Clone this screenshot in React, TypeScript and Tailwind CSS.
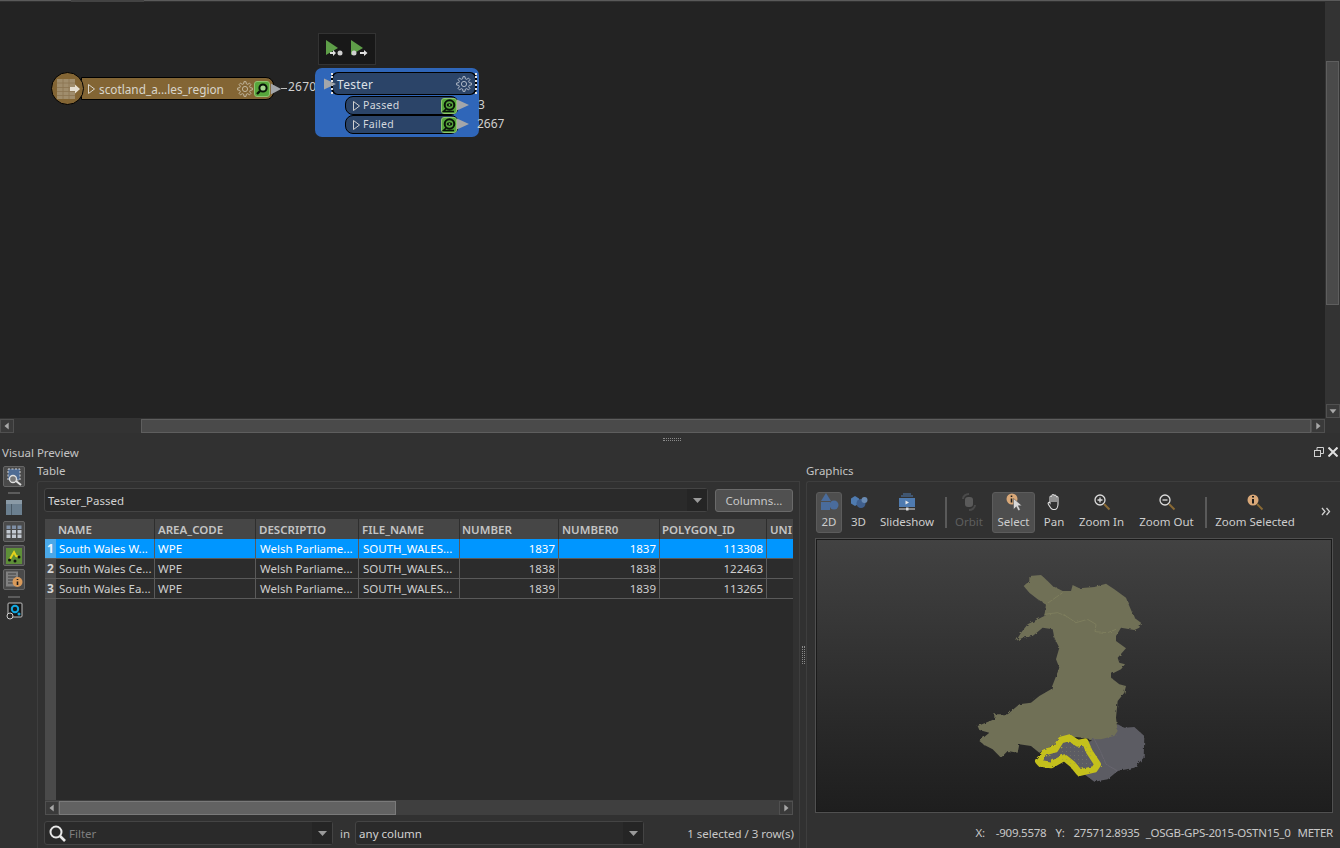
import React from "react";

const font = { fontFamily: '"Noto Sans", "Open Sans", sans-serif' };

function gearPath() {
  const pts: string[] = [];
  const n = 8;
  for (let i = 0; i < n; i++) {
    const a = (i / n) * Math.PI * 2;
    const s = Math.PI / n;
    const list: [number, number][] = [
      [5.4, a - s * 0.62],
      [7.4, a - s * 0.36],
      [7.4, a + s * 0.36],
      [5.4, a + s * 0.62],
    ];
    list.forEach(([r, t]) => pts.push(`${(8 + r * Math.sin(t)).toFixed(2)} ${(8 - r * Math.cos(t)).toFixed(2)}`));
  }
  return "M" + pts.join("L") + "Z";
}

function Gear({ c = "#cfc8b4" }: { c?: string }) {
  return (
    <svg width="16" height="16" viewBox="0 0 16 16" fill="none" stroke={c} strokeWidth="0.8">
      <circle cx="8" cy="8" r="2.600" />
      <path d={gearPath()} />
    </svg>
  );
}

function Inspect({ eye }: { eye?: boolean }) {
  return (
    <svg width="16" height="16" viewBox="0 0 16 16">
      <rect x="0.5" y="0.5" width="15" height="15" rx="2.5" fill="#57a63c" stroke="#8fc46f" />
      {eye ? (
        <>
          <circle cx="8.500" cy="7" r="4.800" fill="#57a63c" stroke="#071207" strokeWidth="2" />
          <ellipse cx="8.500" cy="7" rx="2.800" ry="1.800" fill="#071207" />
          <circle cx="8.500" cy="7" r="0.800" fill="#a5d68f" />
          <path d="M5 11l-2.500 2.500H13" fill="none" stroke="#071207" strokeWidth="1.600" />
        </>
      ) : (
        <>
          <circle cx="9" cy="7" r="3.600" fill="#a5d68f" stroke="#071207" strokeWidth="2" />
          <path d="M6 10l-3 3" stroke="#071207" strokeWidth="2.400" />
        </>
      )}
    </svg>
  );
}

function PortArrow({ w = 14 }: { w?: number }) {
  return (
    <svg width={w} height="14" viewBox="0 0 14 14" preserveAspectRatio="none">
      <path d="M1 1.5L13 7 1 12.500z" fill="#a3a6aa" />
    </svg>
  );
}

function Expand({ c = "#cfcfcf" }: { c?: string }) {
  return (
    <svg width="9" height="12" viewBox="0 0 9 12" fill="none" stroke={c}>
      <path d="M1.500 1.500L7.500 6 1.500 10.500z" />
    </svg>
  );
}

function Port({ label, y }: { label: string; y: string }) {
  return (
    <div className={`absolute left-[30px] ${y} flex h-[19px] w-[114px] items-center rounded-[8px] border border-black bg-[#2b4468] pl-[6px] text-[10.500px] text-[#d4d8de]`}>
      <Expand />
      <span className="ml-[2px] tracking-[0.3px]">{label}</span>
      <span className="ml-auto mr-[1px] flex">
        <Inspect eye />
      </span>
    </div>
  );
}

function Canvas() {
  return (
    <div className="relative flex-1 overflow-hidden bg-[#232323]">
      <div className="absolute left-[51px] top-[70px] flex items-center">
        <div className="relative z-10 flex h-[33px] w-[33px] items-center justify-center rounded-full border border-black bg-[#836534]">
          <svg width="28" height="26" viewBox="0 0 28 26">
            <rect x="3" y="3" width="18" height="20" fill="#a08d6c" />
            <path d="M3 7h18M3 11.500h18M3 15.500h18M3 19.500h18M9 3v20M15 3v20" stroke="#8a7350" strokeWidth="0.800" />
            <path d="M16 11h5V8.500l5 4.500-5 4.500V15h-5z" fill="#e6dfd0" />
          </svg>
        </div>
        <div className="-ml-[3px] flex h-[23px] w-[193px] items-center rounded-r-[8px] border border-black bg-[#836534] pl-[5px] text-[11.800px] text-[#d9d5cb]">
          <Expand c="#d9d5cb" />
          <span className="ml-[3px] translate-y-[1px]">scotland_a...les_region</span>
          <span className="ml-auto flex items-center gap-[1px] pr-[3px]">
            <Gear />
            <Inspect />
          </span>
        </div>
        <div className="-ml-[4px] flex items-center">
          <PortArrow w={12} />
          <span className="-ml-[1px] h-px w-[6px] bg-[#bdbdbd]" />
        </div>
      </div>
      <div className="absolute left-[288px] top-[76px] text-[12px] tracking-[0.2px] text-[#d0d0d0]">2670</div>
      <div className="absolute left-[318px] top-[31px] flex h-[32px] w-[58px] items-center gap-[6px] border border-[#333333] bg-[#181818] pl-[6px]">
        <svg width="19" height="20" viewBox="0 0 19 20">
          <path d="M1 1l12 8-12 7z" fill="#5e9e48" />
          <path d="M5 13h3v-2l3 3-3 3v-2H5z" fill="#e0e0e0" />
          <circle cx="15" cy="14" r="2.500" fill="#d0d0d0" />
        </svg>
        <svg width="19" height="20" viewBox="0 0 19 20">
          <path d="M1 1l12 8-12 7z" fill="#5e9e48" />
          <circle cx="4" cy="14" r="2.500" fill="#d0d0d0" />
          <path d="M10 13h4v-2l3.500 3-3.500 3v-2h-4z" fill="#e0e0e0" />
        </svg>
      </div>
      <div className="absolute left-[315px] top-[66px] h-[69px] w-[164px] rounded-[7px] bg-[#2f66b9]">
        <div className="absolute left-[16px] top-[4px] flex h-[23px] w-[146px] items-center rounded-[7px] border-x-2 border-y border-black bg-[#2b4468] pl-[4px] text-[12px] tracking-[0.3px] text-[#dde1e7]">
          <span className="translate-y-[1px]">Tester</span>
          <span className="ml-auto mr-[3px] flex">
            <Gear c="#cdd3dc" />
          </span>
        </div>
        <div className="absolute left-[16px] top-[5px] h-[21px] border-l-2 border-dotted border-[#e4e4e4]" />
        <div className="absolute left-[160px] top-[5px] h-[21px] border-l-2 border-dotted border-[#e4e4e4]" />
        <div className="absolute left-[8px] top-[9px]">
          <PortArrow />
        </div>
        <Port label="Passed" y="top-[28px]" />
        <Port label="Failed" y="top-[47px]" />
        <div className="absolute left-[141px] top-[30px]">
          <PortArrow />
        </div>
        <div className="absolute left-[141px] top-[49px]">
          <PortArrow />
        </div>
      </div>
      <div className="absolute left-[478px] top-[94px] text-[12px] text-[#d0d0d0]">3</div>
      <div className="absolute left-[477px] top-[113px] text-[12px] text-[#d0d0d0]">2667</div>
    </div>
  );
}

function ScrollBtn({ dir }: { dir: "l" | "r" | "u" | "d" }) {
  const p = { l: "M9 3v8L4 7z", r: "M5 3v8l5-4z", u: "M3 9h8L7 4z", d: "M3 5h8L7 10z" }[dir];
  return (
    <div className="flex h-[14px] w-[14px] shrink-0 items-center justify-center border border-[#505050] bg-[#3a3a3a]">
      <svg width="12" height="12" viewBox="0 0 14 14">
        <path d={p} fill="#a8a8a8" />
      </svg>
    </div>
  );
}

function Combo({ text, w, icon, dim }: { text: string; w: string; icon?: boolean; dim?: boolean }) {
  return (
    <div className={`flex h-[24px] ${w} items-center rounded-[3px] border border-[#444444] bg-[#2a2a2a] text-[11.500px]`}>
      {icon && (
        <svg className="ml-[3px]" width="19" height="19" viewBox="0 0 19 19" fill="none" stroke="#e8e8e8">
          <circle cx="8" cy="8" r="5.500" strokeWidth="2" />
          <path d="M12 12l5 5" strokeWidth="2.600" />
        </svg>
      )}
      <span className={`${icon ? "ml-[2px]" : "ml-[3px]"} translate-y-[1px] ${dim ? "text-[#7e7e7e]" : "text-[#d2d2d2]"}`}>{text}</span>
      <span className="ml-auto flex h-full w-[20px] items-center justify-center bg-[#252525]">
        <svg width="9" height="5" viewBox="0 0 9 5">
          <path d="M0 0h9L4.500 5z" fill="#9a9a9a" />
        </svg>
      </span>
    </div>
  );
}

const cols = [
  ["NAME", "w-[99px]", "pl-[2px]", "pl-[3px]"],
  ["AREA_CODE", "w-[101px]", "pl-[3px]", "pl-[3px]"],
  ["DESCRIPTIO", "w-[103px]", "pl-[3px]", "pl-[4px]"],
  ["FILE_NAME", "w-[101px]", "pl-[3px]", "pl-[4px]"],
  ["NUMBER", "w-[99px]", "pl-[2px]", "pr-[3px]"],
  ["NUMBER0", "w-[101px]", "pl-[3px]", "pr-[3px]"],
  ["POLYGON_ID", "w-[107px]", "pl-[2px]", "pr-[3px]"],
  ["UNI", "w-[26px]", "pl-[3px]", "pl-[3px]"],
];

const rows = [
  ["South Wales W...", "WPE", "Welsh Parliame...", "SOUTH_WALES...", "1837", "1837", "113308", ""],
  ["South Wales Ce...", "WPE", "Welsh Parliame...", "SOUTH_WALES...", "1838", "1838", "122463", ""],
  ["South Wales Ea...", "WPE", "Welsh Parliame...", "SOUTH_WALES...", "1839", "1839", "113265", ""],
];

function DataGrid() {
  return (
    <div className="flex h-[296px] w-[748px] flex-col overflow-hidden bg-[#2a2a2a]">
      <div className="flex h-[20px] shrink-0 bg-[#464646] text-[11.500px] font-semibold text-[#c4c4c4]">
        <div className="w-[11px] shrink-0" />
        {cols.map(([n, w, hp]) => (
          <div key={n} className={`${w} ${hp} shrink-0 overflow-hidden whitespace-nowrap border-r border-[#2e2e2e] leading-[21px] last:border-r-0`}>
            {n}
          </div>
        ))}
      </div>
      {rows.map((r, i) => (
        <div key={i} className={`flex h-[20px] shrink-0 border-b border-[#5a5a5a] text-[11.500px] ${i === 0 ? "bg-[#0096ff] text-white" : "bg-[#2c2c2c] text-[#cfcfcf]"}`}>
          <div className={`flex w-[11px] shrink-0 items-center justify-center text-[12px] font-bold ${i === 0 ? "bg-[#4aa8e8] text-[#e8f4ff]" : "bg-[#4a4a4a] text-[#d4d4d4]"}`}>
            {i + 1}
          </div>
          {r.map((c, j) => (
            <div key={j} className={`${cols[j][1]} ${cols[j][3]} shrink-0 overflow-hidden whitespace-nowrap border-r border-[#5a5a5a] leading-[19px] last:border-r-0 ${j >= 4 && j <= 6 ? "text-right" : ""}`}>
              {c}
            </div>
          ))}
        </div>
      ))}
      <div className="flex flex-1">
        <div className="w-[11px] bg-[#4a4a4a]" />
        <div className="flex-1" />
      </div>
      <div className="flex h-[15px] shrink-0 items-center bg-[#3f3f3f]">
        <ScrollBtn dir="l" />
        <div className="h-[14px] w-[337px] border border-[#7a7a7a] bg-[#626262]" />
        <div className="flex-1" />
        <ScrollBtn dir="r" />
      </div>
    </div>
  );
}

function ToolBtn({ label, w, active, dim, children }: { label: string; w: string; active?: boolean; dim?: boolean; children: React.ReactNode }) {
  return (
    <div className={`flex h-[41px] ${w} shrink-0 flex-col items-center rounded-[3px] border text-[11.500px] ${active ? "border-[#5c5c5c] bg-[#4e4e4e]" : "border-transparent"} ${dim ? "text-[#5e5e5e]" : "text-[#cdcdcd]"}`}>
      <div className="flex h-[18px] items-center justify-center">{children}</div>
      <div className="mt-[3px] whitespace-nowrap leading-[16px]">{label}</div>
    </div>
  );
}

function Lens({ mark }: { mark: "plus" | "minus" | "info" }) {
  return (
    <svg width="18" height="18" viewBox="0 0 18 18">
      {mark === "info" ? (
        <>
          <circle cx="7" cy="7" r="5.500" fill="#d9a878" />
          <path d="M7 3v1.500M7 6v4.500" stroke="#1c1c1c" strokeWidth="2" />
        </>
      ) : (
        <>
          <circle cx="7" cy="7" r="5" fill="none" stroke="#dcdcdc" strokeWidth="1.300" />
          <path d={mark === "plus" ? "M4.500 7h5M7 4.500v5" : "M4.500 7h5"} stroke="#dcdcdc" strokeWidth="1.300" />
        </>
      )}
      <path d="M11 11l5.500 5.500" stroke="#8a6a35" strokeWidth="2" />
    </svg>
  );
}

function GraphicsToolbar() {
  return (
    <div className="flex h-[42px] items-center">
      <ToolBtn label="2D" w="w-[26px]" active>
        <svg width="20" height="18" viewBox="0 0 20 18">
          <path d="M7 0l5 8H2z" fill="#4a6c9c" />
          <rect x="2" y="9" width="9" height="8" fill="#4a6c9c" />
          <circle cx="15" cy="12" r="4.500" fill="#4a6c9c" />
        </svg>
      </ToolBtn>
      <div className="w-[4px]" />
      <ToolBtn label="3D" w="w-[25px]">
        <svg width="18" height="16" viewBox="0 0 18 16">
          <path d="M5 2l4 2.500v5L5 12 1 9.500v-5z" fill="#4f7bb0" />
          <circle cx="11" cy="9.500" r="4.500" fill="#3f5f8d" />
          <circle cx="14.500" cy="6" r="3" fill="#6a8bb3" />
        </svg>
      </ToolBtn>
      <div className="w-[7px]" />
      <ToolBtn label="Slideshow" w="w-[58px]">
        <svg width="18" height="18" viewBox="0 0 18 18">
          <path d="M5 1h8" stroke="#4f7bb0" />
          <path d="M3 3h12" stroke="#4f7bb0" />
          <rect x="1" y="5" width="16" height="9" fill="#4f7bb0" />
          <path d="M7.500 7.500v4l3.500-2z" fill="#e8e8e8" />
          <path d="M1 16h16" stroke="#dddddd" />
          <rect x="8" y="14.500" width="2.500" height="3" fill="#dddddd" />
        </svg>
      </ToolBtn>
      <div className="mx-[5px] ml-[9px] h-[31px] w-[2px] bg-[#5a5a5a]" />
      <ToolBtn label="Orbit" w="w-[34px]" dim>
        <svg width="18" height="18" viewBox="0 0 18 18">
          <rect x="5" y="4" width="8" height="10" rx="3" fill="#5a5a5a" />
          <path d="M3 6c0-3 3-5 6-5M15 12c0 3-3 5-6 5" fill="none" stroke="#4a4a4a" strokeWidth="2" />
        </svg>
      </ToolBtn>
      <div className="w-[6px]" />
      <ToolBtn label="Select" w="w-[43px]" active>
        <svg width="18" height="18" viewBox="0 0 18 18">
          <circle cx="7" cy="6" r="5.500" fill="#d9a878" />
          <path d="M6.500 2.500v1.500M6.500 5.500v4" stroke="#1c1c1c" strokeWidth="1.600" />
          <path d="M8.500 5.500v11l2.800-2.800 2 4 2-1-2-4h3.700z" fill="#d8d8d8" stroke="#444444" strokeWidth="0.500" />
        </svg>
      </ToolBtn>
      <div className="w-[5px]" />
      <ToolBtn label="Pan" w="w-[28px]">
        <svg width="16" height="18" viewBox="0 0 16 18" fill="none" stroke="#e0e0e0" strokeWidth="1.100">
          <path d="M4 10V4a1 1 0 012 0V2.500a1 1 0 012 0V3a1 1 0 012 0v1.500a1 1 0 012 0V11c0 3-1.500 5.500-3.500 5.500H7C5 16.500 4 14 2.500 11.500 1.500 9.800 3 8.500 4 10zM6 3.500V9M8 3v6M10 4v5" />
        </svg>
      </ToolBtn>
      <div className="w-[5px]" />
      <ToolBtn label="Zoom In" w="w-[57px]">
        <Lens mark="plus" />
      </ToolBtn>
      <div className="w-[3px]" />
      <ToolBtn label="Zoom Out" w="w-[67px]">
        <Lens mark="minus" />
      </ToolBtn>
      <div className="mx-[5px] h-[31px] w-[2px] bg-[#5a5a5a]" />
      <ToolBtn label="Zoom Selected" w="w-[86px]">
        <Lens mark="info" />
      </ToolBtn>
      <svg className="ml-[23px] mt-[-2px]" width="10" height="9" viewBox="0 0 10 9" fill="none" stroke="#d0d0d0" strokeWidth="1.300">
        <path d="M1 1l3 3.500L1 8M5.500 1l3 3.500L5.500 8" />
      </svg>
    </div>
  );
}

function WalesMap() {
  const dots: [number, number][] = [];
  for (let x = 335; x < 420; x += 12) for (let y = 560; y < 610; y += 12) dots.push([x, y]);
  return (
    <svg width="210" height="230" viewBox="0 0 630 690">
      <defs>
        <filter id="rough" x="-5%" y="-5%" width="110%" height="110%">
          <feTurbulence type="fractalNoise" baseFrequency="0.09" numOctaves="2" seed="4" />
          <feDisplacementMap in="SourceGraphic" scale="9" />
        </filter>
      </defs>
      <g filter="url(#rough)">
        <path d="M500 490L520 500L550 498L580 525L578 590L550 620L500 630L470 655L430 662L400 640L380 560L420 535Z" fill="#5c5b63" />
        <path d="M235 45L270 42L290 60L305 75L335 90L360 90L365 72L385 82L430 78L465 68L490 85L525 110L535 135L550 170L570 185L565 200L550 207L510 200L495 225L495 240L525 262L500 290L505 305L522 310L510 325L480 340L480 350L505 370L525 375L520 395L500 420L495 470L500 510L490 525L450 535L420 535L395 530L375 528L320 545L290 562L265 575L240 555L205 550L200 575L170 570L150 590L125 565L100 552L85 540L115 515L85 507L80 495L130 475L130 460L170 460L205 430L240 425L265 405L300 385L325 320L315 295L325 260L310 230L305 205L275 200L245 225L215 230L195 240L210 215L230 190L280 165L285 130L260 115L235 95L218 75L235 60Z" fill="#6f6f57" />
        <path d="M285 130L335 95M280 160L320 155L345 165L375 185L410 175L435 190L432 212L470 215L495 205" fill="none" stroke="#85855f" strokeWidth="2" />
        <path d="M430 535L450 575L465 610L500 630" fill="none" stroke="#6c6b74" strokeWidth="2" />
        <path d="M262 600L285 572L312 565L330 537L355 530L380 547L402 542L415 572L440 610L430 625L385 635L365 610L340 590L300 612L268 607Z" fill="#5c5b63" stroke="#c4c01c" strokeWidth="20" strokeLinejoin="round" />
      </g>
      {dots.map(([x, y]) => (
        <circle key={`${x}-${y}`} cx={x} cy={y} r="1.300" fill="#8a8a70" />
      ))}
    </svg>
  );
}

function SideBtn({ children }: { children: React.ReactNode }) {
  return <div className="flex h-[21px] w-[22px] items-center justify-center rounded-[2px] border border-[#666666] bg-[#4a4a4a]">{children}</div>;
}

function SideBar() {
  return (
    <div className="flex w-[37px] shrink-0 flex-col items-start pl-[3px] pt-[5px]">
      <SideBtn>
        <svg width="18" height="18" viewBox="0 0 18 18">
          <rect x="3" y="1" width="12" height="11" fill="#4f6c94" stroke="#d0d0d0" strokeDasharray="2 1.500" />
          <circle cx="8" cy="11" r="3.500" fill="#777777" stroke="#e0e0e0" strokeWidth="1.300" />
          <path d="M11 13l5 4" stroke="#e0e0e0" strokeWidth="2" />
        </svg>
      </SideBtn>
      <div className="ml-[5px] mt-[5px] h-[2px] w-[12px] bg-[#5c5c5c]" />
      <div className="ml-[2px] mt-[5px]">
        <svg width="18" height="17" viewBox="0 0 18 17">
          <rect x="1" y="1" width="16" height="15" fill="#6b7f8f" />
          <rect x="1" y="1" width="16" height="4" fill="#8a9aa6" />
          <path d="M6.500 5v11" stroke="#4a5a66" />
        </svg>
      </div>
      <div className="mt-[5px]">
        <SideBtn>
          <svg width="16" height="14" viewBox="0 0 16 14" fill="#7f8fa5">
            <rect x="0.500" y="0.500" width="4" height="3.500" />
            <rect x="6" y="0.500" width="4" height="3.500" />
            <rect x="11.500" y="0.500" width="4" height="3.500" />
            <rect x="0.500" y="5" width="4" height="3.500" fill="#c2c8d0" />
            <rect x="6" y="5" width="4" height="3.500" fill="#c2c8d0" />
            <rect x="11.500" y="5" width="4" height="3.500" fill="#c2c8d0" />
            <rect x="0.500" y="9.500" width="4" height="3.500" fill="#c2c8d0" />
            <rect x="6" y="9.500" width="4" height="3.500" fill="#c2c8d0" />
            <rect x="11.500" y="9.500" width="4" height="3.500" fill="#c2c8d0" />
          </svg>
        </SideBtn>
      </div>
      <div className="mt-[3px]">
        <SideBtn>
          <svg width="16" height="16" viewBox="0 0 16 16">
            <rect width="16" height="16" fill="#5e8f38" />
            <path d="M4 11l4-7 2 4 3 1" fill="none" stroke="#e4d21c" strokeWidth="2" />
            <circle cx="3.500" cy="12" r="1.500" fill="#111111" />
            <circle cx="9" cy="13" r="1.500" fill="#111111" />
            <circle cx="13" cy="9" r="1.500" fill="#111111" />
          </svg>
        </SideBtn>
      </div>
      <div className="mt-[3px]">
        <SideBtn>
          <svg width="18" height="17" viewBox="0 0 18 17">
            <rect x="1" y="0.500" width="12" height="15" fill="#808080" />
            <path d="M3 3h8M3 6h8M3 9h5M3 12h5" stroke="#3f3f3f" />
            <circle cx="12.500" cy="11" r="5" fill="#d99a5a" />
            <path d="M12.500 8v1M12.500 10.500v3.500" stroke="#1c1c1c" strokeWidth="1.600" />
          </svg>
        </SideBtn>
      </div>
      <div className="ml-[5px] mt-[6px] h-[2px] w-[12px] bg-[#5c5c5c]" />
      <div className="ml-[3px] mt-[4px]">
        <svg width="17" height="18" viewBox="0 0 17 18">
          <rect x="2" y="1" width="14" height="14" rx="1" fill="#181818" stroke="#bdbdbd" />
          <circle cx="9" cy="7" r="3.200" fill="none" stroke="#12a8e0" strokeWidth="2" />
          <circle cx="13" cy="12" r="1.500" fill="#12a8e0" />
          <circle cx="4" cy="14" r="3" fill="#262626" stroke="#cfcfcf" />
        </svg>
      </div>
    </div>
  );
}

export default function App() {
  return (
    <div className="flex h-[848px] w-[1340px] flex-col overflow-hidden bg-[#313131]" style={font}>
      <div className="flex h-[433px] shrink-0 flex-col">
        <div className="flex h-[2px] shrink-0">
          <div className="h-[1px] w-[71px] bg-[#5a5a5a]" />
          <div className="h-[2px] w-[73px] bg-[#434343]" />
          <div className="h-[1px] flex-1 bg-[#5a5a5a]" />
        </div>
        <div className="flex flex-1 overflow-hidden">
          <Canvas />
          <div className="flex w-[15px] shrink-0 flex-col items-center bg-[#333333]">
            <div className="h-[59px]" />
            <div className="h-[244px] w-[13px] border border-[#5e5e5e] bg-[#4a4a4a]" />
            <div className="flex-1" />
            <ScrollBtn dir="d" />
          </div>
        </div>
        <div className="flex h-[15px] shrink-0 items-center bg-[#333333]">
          <ScrollBtn dir="l" />
          <div className="ml-[127px] h-[14px] w-[1170px] border border-[#5e5e5e] bg-[#4a4a4a]" />
          <ScrollBtn dir="r" />
        </div>
      </div>
      <div className="flex h-[12px] shrink-0 items-center justify-center">
        <div className="ml-[3px] h-[3px] w-[18px] border-y border-dotted border-[#8a8a8a]" />
      </div>
      <div className="flex h-[16px] shrink-0 items-center pl-[2px] pr-[2px] text-[11.500px] text-[#c4c4c4]">
        <span>Visual Preview</span>
        <span className="ml-auto flex -translate-y-[1px] items-center gap-[4px]">
          <svg width="10" height="10" viewBox="0 0 10 10" fill="none" stroke="#d0d0d0">
            <rect x="0.500" y="3.500" width="6" height="6" />
            <path d="M3 3.500v-3h6.500v6h-3" />
          </svg>
          <svg width="10" height="10" viewBox="0 0 10 10" stroke="#e0e0e0" strokeWidth="2">
            <path d="M0.500 0.500l9 9M9.500 0.500l-9 9" />
          </svg>
        </span>
      </div>
      <div className="flex flex-1">
        <SideBar />
        <div className="flex w-[763px] shrink-0 flex-col">
          <div className="h-[20px] text-[11.500px] leading-[20px] text-[#c4c4c4]">Table</div>
          <div className="flex-1 rounded-tl-[3px] border-l border-t border-r border-[#3e3e3e] pl-[6px] pt-[6px]">
            <div className="flex w-[750px] items-center gap-[7px]">
              <Combo text="Tester_Passed" w="w-[664px]" />
              <div className="flex h-[23px] w-[78px] items-center justify-center rounded-[3px] border border-[#6a6a6a] bg-[#505050] text-[11.500px] text-[#c8c8c8]">
                <span className="translate-y-[1px]">Columns...</span>
              </div>
            </div>
            <div className="ml-px mt-[7px]">
              <DataGrid />
            </div>
            <div className="mt-[6px] flex items-center text-[11.500px] text-[#c8c8c8]">
              <Combo text="Filter" w="w-[289px]" icon dim />
              <span className="ml-[7px] mr-[5px] translate-y-[1px]">in</span>
              <Combo text="any column" w="w-[289px]" />
              <span className="ml-auto mr-[5px] translate-y-[1px]">1 selected / 3 row(s)</span>
            </div>
          </div>
        </div>
        <div className="flex w-[6px] shrink-0 items-center justify-center">
          <div className="h-[18px] w-[3px] border-x border-dotted border-[#8a8a8a]" />
        </div>
        <div className="flex flex-1 flex-col">
          <div className="h-[20px] text-[11.500px] leading-[20px] text-[#c4c4c4]">Graphics</div>
          <div className="flex flex-1 flex-col rounded-tl-[3px] border-l border-t border-[#3e3e3e] pl-[9px] pt-[9px]">
            <GraphicsToolbar />
            <div className="ml-[-1px] mt-[5px] h-[275px] w-[518px] border border-[#505050] bg-[#1a1a1a] p-[1px]">
              <div className="flex h-full w-full items-end justify-center bg-gradient-to-b from-[#424242] to-[#1e1e1e] pb-[20px] pr-[36px]">
                <WalesMap />
              </div>
            </div>
            <div className="mt-[11px] flex justify-end whitespace-pre pr-[7px] text-[11.500px] tracking-[-0.25px] text-[#c8c8c8]">
              <span>X:</span>
              <span className="ml-[11px]">-909.5578</span>
              <span className="ml-[9px]">Y:</span>
              <span className="ml-[9px]">275712.8935</span>
              <span className="ml-[6px]">_OSGB-GPS-2015-OSTN15_0</span>
              <span className="ml-[7px]">METER</span>
            </div>
          </div>
        </div>
      </div>
    </div>
  );
}
